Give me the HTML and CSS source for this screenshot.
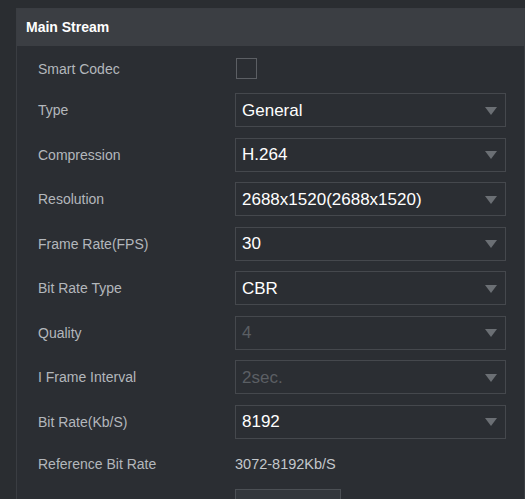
FILE: index.html
```html
<!DOCTYPE html>
<html>
<head>
<meta charset="utf-8">
<link rel="stylesheet" href="styles.css">
</head>
<body>
<div class="panel">
  <div class="panel-header">Main Stream</div>
  <div class="panel-body">
    <div class="row row-check">
      <div class="label">Smart Codec</div>
      <div class="checkbox"></div>
    </div>
    <div class="row">
      <div class="label">Type</div>
      <div class="select"><span class="val">General</span><span class="arrow"></span></div>
    </div>
    <div class="row">
      <div class="label">Compression</div>
      <div class="select"><span class="val">H.264</span><span class="arrow"></span></div>
    </div>
    <div class="row">
      <div class="label">Resolution</div>
      <div class="select"><span class="val">2688x1520(2688x1520)</span><span class="arrow"></span></div>
    </div>
    <div class="row">
      <div class="label">Frame Rate(FPS)</div>
      <div class="select"><span class="val">30</span><span class="arrow"></span></div>
    </div>
    <div class="row">
      <div class="label">Bit Rate Type</div>
      <div class="select"><span class="val">CBR</span><span class="arrow"></span></div>
    </div>
    <div class="row">
      <div class="label">Quality</div>
      <div class="select disabled"><span class="val">4</span><span class="arrow"></span></div>
    </div>
    <div class="row">
      <div class="label">I Frame Interval</div>
      <div class="select disabled"><span class="val">2sec.</span><span class="arrow"></span></div>
    </div>
    <div class="row">
      <div class="label">Bit Rate(Kb/S)</div>
      <div class="select"><span class="val">8192</span><span class="arrow"></span></div>
    </div>
    <div class="row row-ref">
      <div class="label">Reference Bit Rate</div>
      <div class="ref">3072-8192Kb/S</div>
    </div>
    <div class="row row-btn">
      <div class="label"></div>
      <div class="button"></div>
    </div>
  </div>
</div>
</body>
</html>
```
FILE: styles.css
```css
html, body {
  margin: 0;
  background: #2a2d31;
  height: 100%;
  overflow: hidden;
}
body {
  padding: 8px 0 0 16px;
  box-sizing: border-box;
  font-family: "Liberation Sans", Arial, sans-serif;
}
.panel {
  width: 509px;
  height: 491px;
  box-sizing: border-box;
  border: 1px solid #3a3d42;
  border-bottom: none;
  background: #2b2e33;
  overflow: hidden;
}
.panel-header {
  height: 37px;
  background: #3b3e43;
  color: #ffffff;
  font-weight: bold;
  font-size: 14px;
  line-height: 37px;
  padding-left: 9px;
  box-sizing: border-box;
}
.panel-body {
  padding-top: 12px;
  padding-left: 21px;
}
.row {
  display: flex;
  align-items: flex-start;
  height: 44.57px;
}
.label {
  width: 197px;
  flex: none;
  color: #b3b7bc;
  font-size: 14px;
  line-height: 35px;
}
.row-check {
  height: 35px;
}
.row-check .label {
  line-height: 23px;
}
.checkbox {
  width: 21px;
  height: 21px;
  box-sizing: border-box;
  border: 1px solid #5c5f64;
  margin-left: 1px;
}
.select {
  width: 271px;
  height: 34px;
  box-sizing: border-box;
  border: 1px solid #45484d;
  display: flex;
  align-items: center;
  justify-content: space-between;
  padding: 1px 8px 0 6px;
}
.val {
  color: #ffffff;
  font-size: 17px;
}
.select.disabled .val {
  color: #5b5f64;
}
.arrow {
  width: 0;
  height: 0;
  border-left: 6px solid transparent;
  border-right: 6px solid transparent;
  border-top: 8px solid #6b6f74;
}
.row-ref {
  height: 39.4px;
}
.row-ref .label {
  line-height: 29px;
}
.ref {
  color: #c3c7cb;
  font-size: 14.5px;
  line-height: 29px;
}
.button {
  width: 106px;
  height: 34px;
  flex: none;
  box-sizing: border-box;
  border: 1px solid #4c5055;
  background: #33373c;
}
```
